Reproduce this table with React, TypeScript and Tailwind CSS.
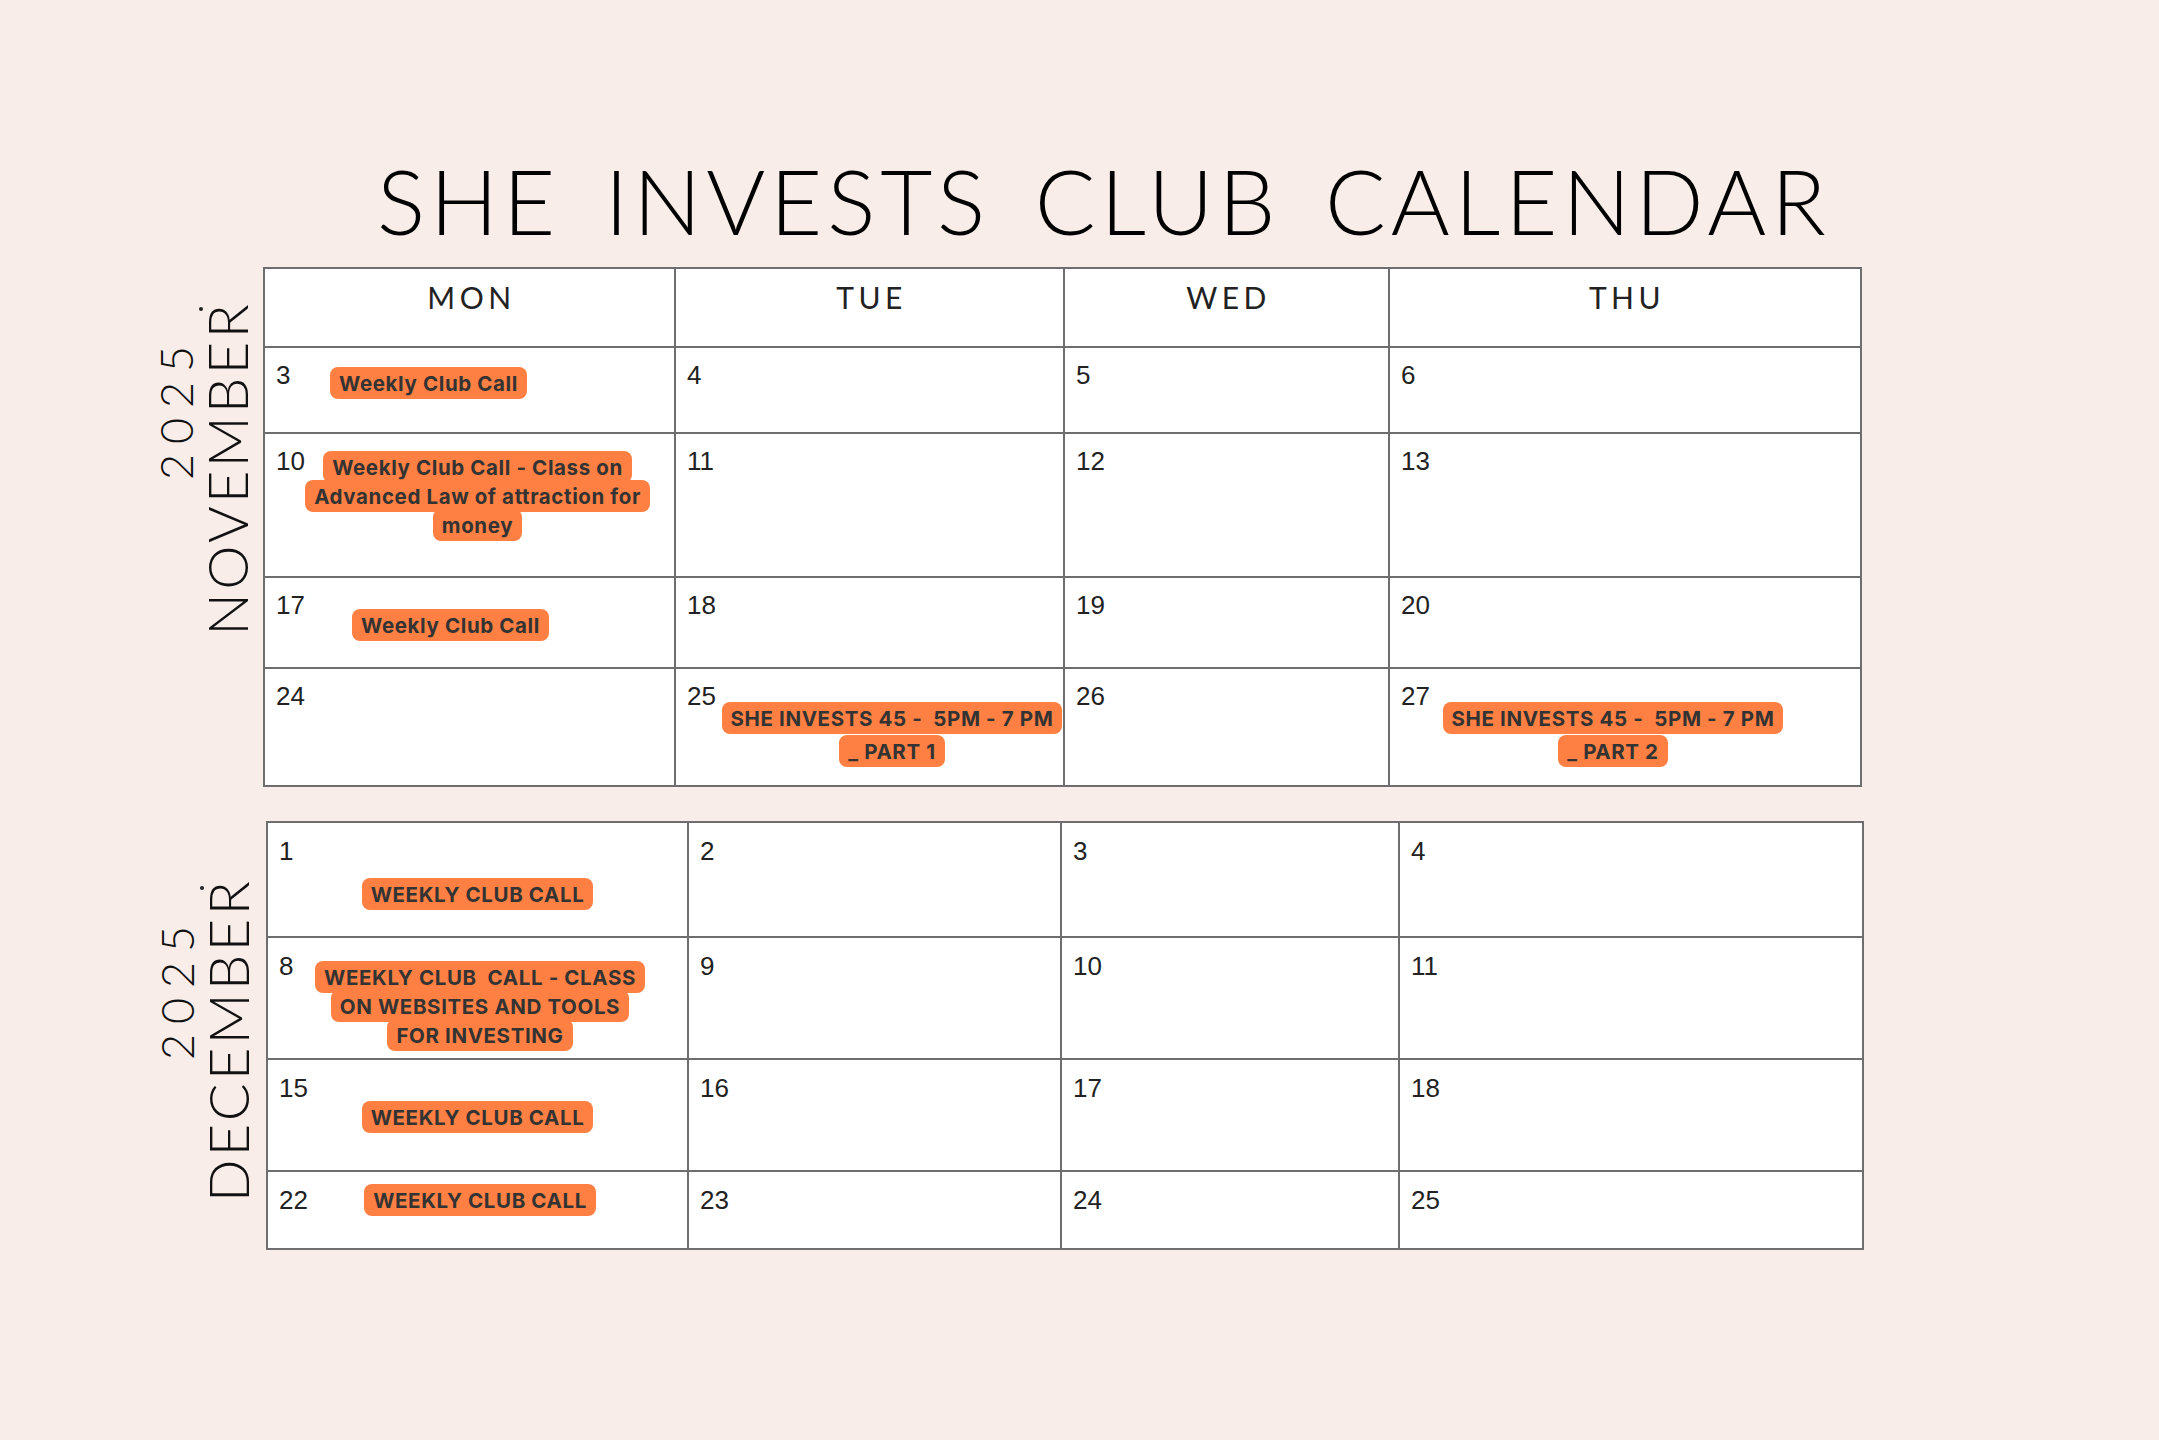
import React, { Fragment } from "react";

type BadgeSpec = { lines: string[]; pos: string; lead: string };
type CellSpec = { n: string; badge?: BadgeSpec };

const NUM_FONT = "[font-family:'Liberation_Sans',Arial,sans-serif]";
const BADGE_FONT = "[font-family:Inter,'Open_Sans',sans-serif]";
const LATO = "[font-family:Lato,'Noto_Sans',sans-serif]";

function Badge({ b }: { b: BadgeSpec }) {
  return (
    <div className={`col-start-1 row-start-1 flex justify-center items-start ${b.pos}`}>
      <div className={`text-center whitespace-pre ${b.lead}`}>
        <span
          className={`box-decoration-clone bg-[#FF8042] rounded-[8px] px-[9px] py-[3.5px] text-[20.5px] tracking-[0.03em] font-bold text-[#333333] ${BADGE_FONT}`}
        >
          {b.lines.map((l, i) => (
            <Fragment key={i}>
              {i > 0 && <br />}
              {l}
            </Fragment>
          ))}
        </span>
      </div>
    </div>
  );
}

function Cell({ c, numPad }: { c: CellSpec; numPad: string }) {
  return (
    <div className="bg-white grid items-start">
      <div className={`col-start-1 row-start-1 ${numPad} text-[26px] leading-[26px] text-[#222222] ${NUM_FONT}`}>
        {c.n}
      </div>
      {c.badge && <Badge b={c.badge} />}
    </div>
  );
}

const nov: CellSpec[] = [
  { n: "3", badge: { lines: ["Weekly Club Call"], pos: "pt-[21px] pr-[82px]", lead: "leading-[28px]" } },
  { n: "4" },
  { n: "5" },
  { n: "6" },
  {
    n: "10",
    badge: {
      lines: ["Weekly Club Call - Class on", "Advanced Law of attraction for", "money"],
      pos: "pt-[19px] pl-[16px]",
      lead: "leading-[28px]",
    },
  },
  { n: "11" },
  { n: "12" },
  { n: "13" },
  { n: "17", badge: { lines: ["Weekly Club Call"], pos: "pt-[33px] pr-[38px]", lead: "leading-[28px]" } },
  { n: "18" },
  { n: "19" },
  { n: "20" },
  { n: "24" },
  {
    n: "25",
    badge: { lines: ["SHE INVESTS 45 -  5PM - 7 PM", "_ PART 1"], pos: "pt-[33px] pl-[45px]", lead: "leading-[31px]" },
  },
  { n: "26" },
  {
    n: "27",
    badge: { lines: ["SHE INVESTS 45 -  5PM - 7 PM", "_ PART 2"], pos: "pt-[33px] pr-[24px]", lead: "leading-[31px]" },
  },
];

const dec: CellSpec[] = [
  { n: "1", badge: { lines: ["WEEKLY CLUB CALL"], pos: "pt-[57px]", lead: "leading-[28px]" } },
  { n: "2" },
  { n: "3" },
  { n: "4" },
  {
    n: "8",
    badge: {
      lines: ["WEEKLY CLUB  CALL - CLASS", "ON WEBSITES AND TOOLS", "FOR INVESTING"],
      pos: "pt-[25px] pl-[5px]",
      lead: "leading-[28px]",
    },
  },
  { n: "9" },
  { n: "10" },
  { n: "11" },
  { n: "15", badge: { lines: ["WEEKLY CLUB CALL"], pos: "pt-[43px]", lead: "leading-[28px]" } },
  { n: "16" },
  { n: "17" },
  { n: "18" },
  { n: "22", badge: { lines: ["WEEKLY CLUB CALL"], pos: "pt-[14px] pl-[5px]", lead: "leading-[28px]" } },
  { n: "23" },
  { n: "24" },
  { n: "25" },
];

const days = ["MON", "TUE", "WED", "THU"];

export default function App() {
  return (
    <div className="min-h-screen w-full bg-[#F8EDE8] pl-[140px] pt-[155px] pb-[190px]">
      <h1
        className={`pl-[237px] whitespace-nowrap text-[90px] leading-[90px] font-light text-black tracking-[0.055em] [word-spacing:0.17em] ${LATO}`}
      >
        SHE INVESTS CLUB CALENDAR
      </h1>

      {/* November */}
      <div className="mt-[22px] flex">
        <div className="relative w-[123px] flex items-end pl-[14px]">
          <div
            className={`[writing-mode:vertical-rl] rotate-180 text-[45px] leading-[45px] font-light text-[#111] tracking-[0.22em] mb-[307px] ${LATO}`}
          >
            2025
          </div>
          <div
            className={`[writing-mode:vertical-rl] rotate-180 text-[56px] leading-[56px] font-light text-[#111] tracking-[0.06em] mb-[152px] ${LATO}`}
          >
            NOVEMBER
          </div>
          <div className="absolute left-[59px] top-[40px] w-[4px] h-[4px] rounded-full bg-[#222]" />
        </div>
        <div className="grid grid-cols-[409px_387px_323px_470px] grid-rows-[77px_84px_142px_89px_116px] gap-[2px] p-[2px] bg-[#6e6e6e]">
          {days.map((d) => (
            <div
              key={d}
              className={`bg-white text-center pt-[13px] pl-[4px] text-[30px] leading-[30px] tracking-[0.15em] text-[#222] ${LATO}`}
            >
              {d}
            </div>
          ))}
          {nov.map((c, i) => (
            <Cell key={i} c={c} numPad="pt-[14px] pl-[11px]" />
          ))}
        </div>
      </div>

      {/* December */}
      <div className="mt-[34px] flex">
        <div className="relative w-[126px] flex items-end pl-[15px]">
          <div
            className={`[writing-mode:vertical-rl] rotate-180 text-[45px] leading-[45px] font-light text-[#111] tracking-[0.22em] mb-[190px] ${LATO}`}
          >
            2025
          </div>
          <div
            className={`[writing-mode:vertical-rl] rotate-180 text-[56px] leading-[56px] font-light text-[#111] tracking-[0.06em] mb-[48px] ${LATO}`}
          >
            DECEMBER
          </div>
          <div className="absolute left-[60px] top-[65px] w-[4px] h-[4px] rounded-full bg-[#222]" />
        </div>
        <div className="grid grid-cols-[419px_371px_336px_462px] grid-rows-[113px_120px_110px_76px] gap-[2px] p-[2px] bg-[#6e6e6e]">
          {dec.map((c, i) => (
            <Cell key={i} c={c} numPad="pt-[15px] pl-[11px]" />
          ))}
        </div>
      </div>
    </div>
  );
}
